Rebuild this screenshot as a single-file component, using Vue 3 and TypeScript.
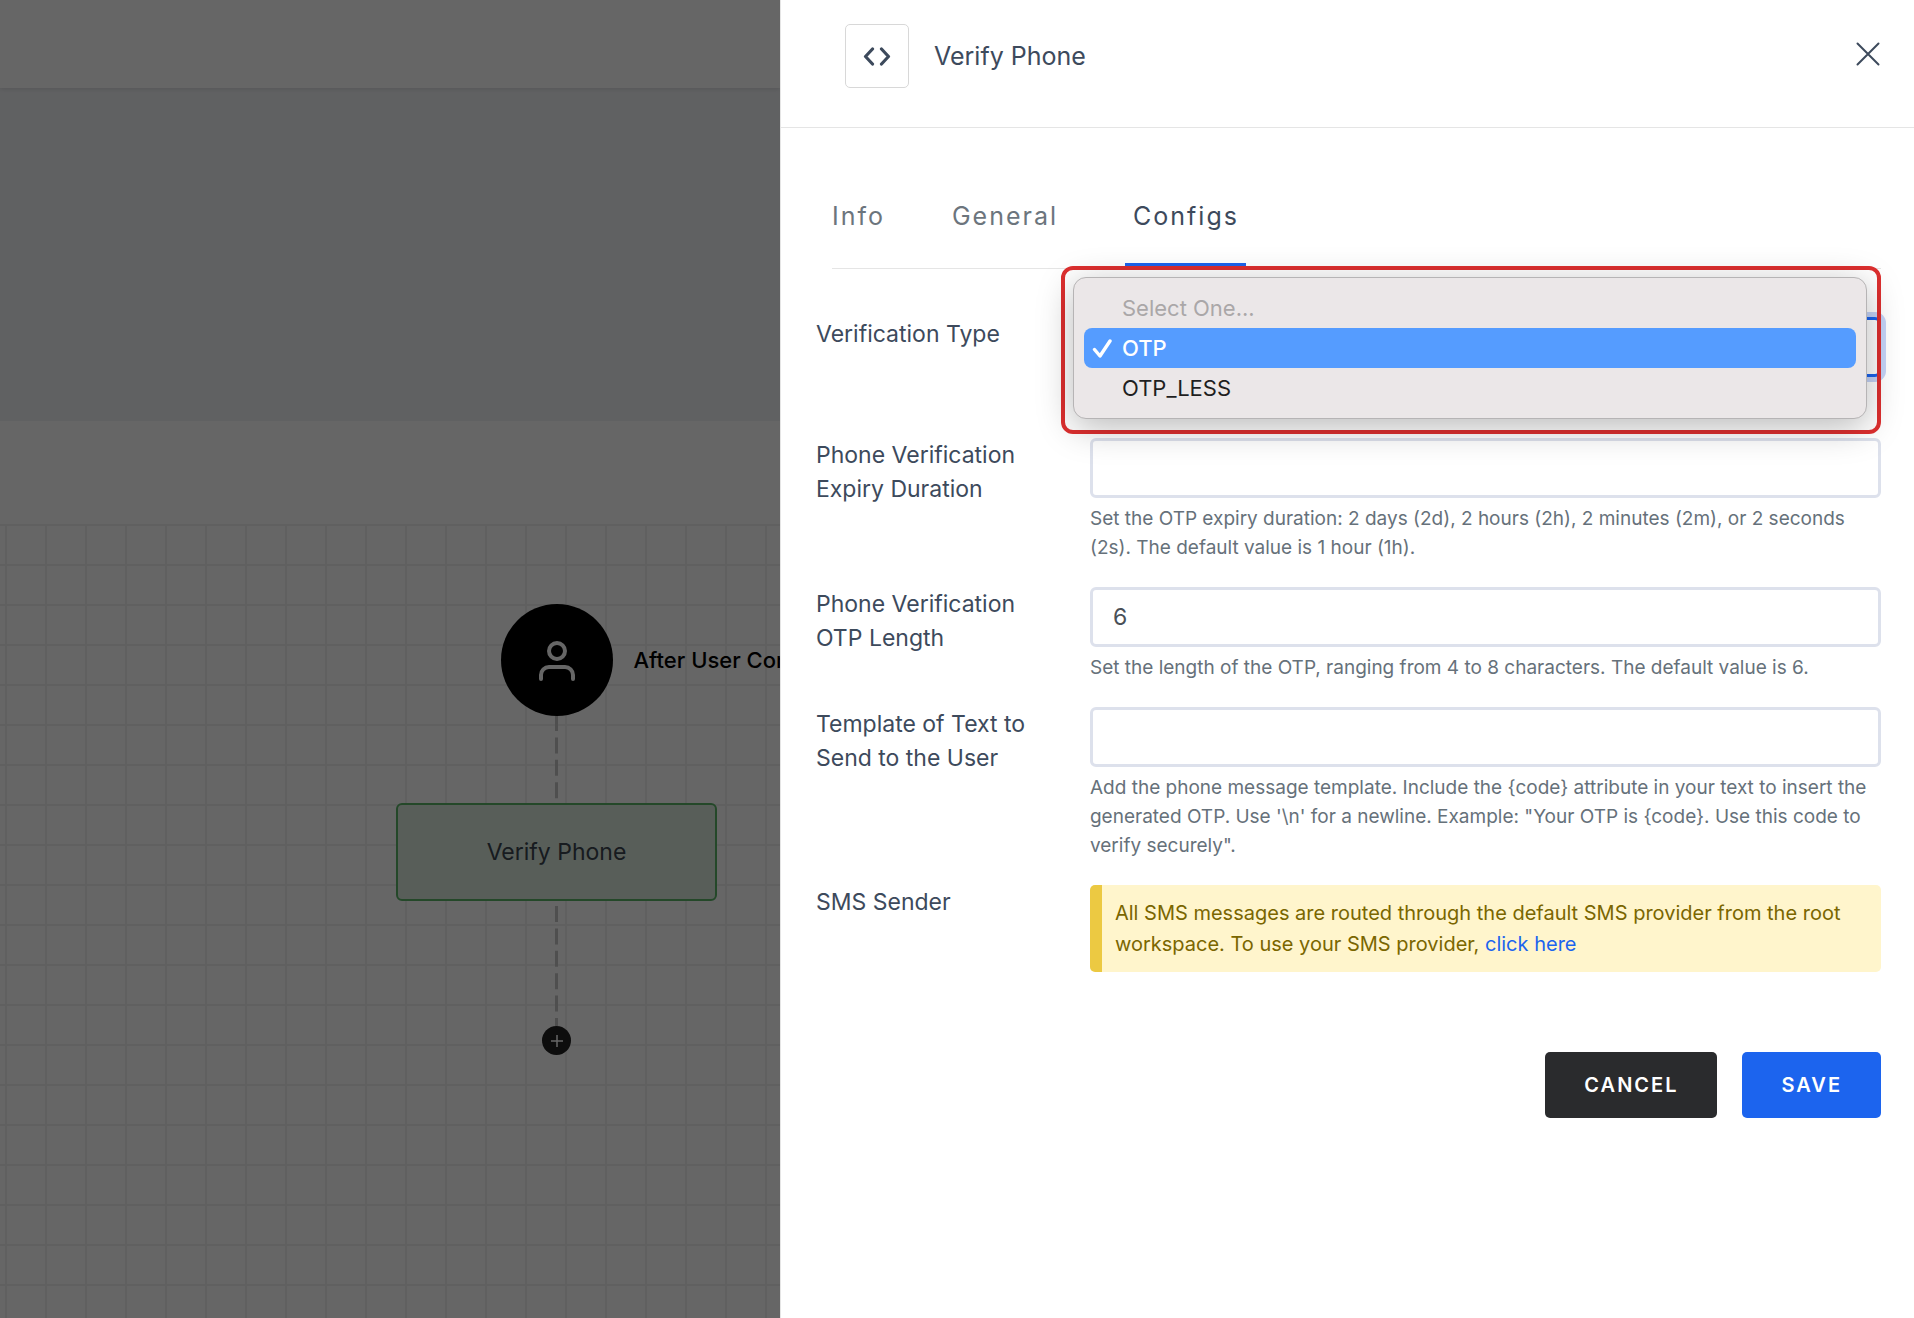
<script setup lang="ts">
import { ref } from 'vue'

interface Option {
  value: string
  label: string
  disabled?: boolean
}

const tabs = ['Info', 'General', 'Configs']
const activeTab = ref('Configs')

const options: Option[] = [
  { value: '', label: 'Select One...', disabled: true },
  { value: 'OTP', label: 'OTP' },
  { value: 'OTP_LESS', label: 'OTP_LESS' },
]

const verificationType = ref('OTP')
const expiry = ref('')
const otpLength = ref('6')
const template = ref('')

const templateHelp =
  'Add the phone message template. Include the {code} attribute in your text to insert the generated OTP. Use \'\\n\' for a newline. Example: "Your OTP is {code}. Use this code to verify securely".'
</script>

<template>
  <div class="page">
    <main class="workspace">
      <div class="topbar"></div>
      <div class="banner"></div>
      <div class="toolbar"></div>
      <div class="canvas">
        <div class="flow">
          <div class="start">
            <svg width="40" height="44" viewBox="0 -1 40 44" fill="none" stroke="#fff" stroke-width="4" stroke-linecap="round">
              <circle cx="20" cy="12" r="8" />
              <path d="M4 40v-4a8 8 0 0 1 8-8h16a8 8 0 0 1 8 8v4" />
            </svg>
            <span class="start-label">After User Con</span>
          </div>
          <svg class="link" width="3" height="87" viewBox="0 0 3 87">
            <line x1="1.5" y1="-1" x2="1.5" y2="83" stroke="#c6c6c6" stroke-width="3" stroke-dasharray="16 6.4" />
          </svg>
          <div class="node">Verify Phone</div>
          <svg class="link" width="3" height="125" viewBox="0 0 3 125">
            <line x1="1.5" y1="5" x2="1.5" y2="125" stroke="#c6c6c6" stroke-width="3" stroke-dasharray="16 6.4" />
          </svg>
          <button class="add" type="button" aria-label="Add step">
            <svg width="14" height="14" viewBox="0 0 14 14" stroke="#fff" stroke-width="1.5">
              <path d="M7 1v12M1 7h12" />
            </svg>
          </button>
        </div>
      </div>
      <div class="dim"></div>
    </main>

    <aside class="drawer">
      <header class="head">
        <div class="head-icon">
          <svg width="28" height="20" viewBox="0 0 28 20" fill="none" stroke="#3d4a5c" stroke-width="3.2" stroke-linecap="round" stroke-linejoin="round">
            <path d="M9.500 3L2.500 10.500L9.500 18M18.500 3l7 7.500L18.500 18" />
          </svg>
        </div>
        <h1>Verify Phone</h1>
        <button class="close" type="button" aria-label="Close">
          <svg width="24" height="24" viewBox="0 0 24 24" stroke="#3d4a5c" stroke-width="2" stroke-linecap="round">
            <path d="M1.500 1.500l21 21M22.500 1.500l-21 21" />
          </svg>
        </button>
      </header>

      <nav class="tabs">
        <button
          v-for="tab in tabs"
          :key="tab"
          type="button"
          class="tab"
          :class="{ active: tab === activeTab }"
          @click="activeTab = tab"
        >
          {{ tab }}
        </button>
      </nav>

      <form class="form" @submit.prevent>
        <div class="row first">
          <label for="type">Verification Type</label>
          <div class="control">
            <select id="type" v-model="verificationType" class="field focused">
              <option v-for="o in options" :key="o.value" :value="o.value" :disabled="o.disabled">{{ o.label }}</option>
            </select>
            <div class="highlight">
              <ul class="menu" role="listbox" aria-label="Verification Type">
                <li
                  v-for="o in options"
                  :key="o.value"
                  role="option"
                  :aria-selected="o.value === verificationType"
                  :class="{ disabled: o.disabled, selected: o.value === verificationType }"
                >
                  <span class="tick">
                    <svg v-if="o.value === verificationType" width="20" height="20" viewBox="0 0 20 20" fill="none" stroke="#fff" stroke-width="3.4" stroke-linecap="round" stroke-linejoin="round">
                      <path d="M2.500 11.500l5.500 6.500L18 3" />
                    </svg>
                  </span>
                  {{ o.label }}
                </li>
              </ul>
            </div>
          </div>
        </div>

        <div class="row">
          <label for="expiry">Phone Verification Expiry Duration</label>
          <div class="control">
            <input id="expiry" v-model="expiry" class="field" type="text" />
            <p class="help">
              Set the OTP expiry duration: 2 days (2d), 2 hours (2h), 2 minutes (2m), or 2 seconds (2s). The default value is 1 hour (1h).
            </p>
          </div>
        </div>

        <div class="row">
          <label for="length">Phone Verification OTP Length</label>
          <div class="control">
            <input id="length" v-model="otpLength" class="field" type="text" />
            <p class="help">Set the length of the OTP, ranging from 4 to 8 characters. The default value is 6.</p>
          </div>
        </div>

        <div class="row">
          <label for="template">Template of Text to Send to the User</label>
          <div class="control">
            <input id="template" v-model="template" class="field" type="text" />
            <p class="help">{{ templateHelp }}</p>
          </div>
        </div>

        <div class="row">
          <span class="label">SMS Sender</span>
          <div class="control">
            <p class="notice">
              All SMS messages are routed through the default SMS provider from the root workspace. To use your SMS provider,
              <a href="#">click here</a>
            </p>
          </div>
        </div>

        <div class="actions">
          <button class="btn dark" type="button">CANCEL</button>
          <button class="btn primary" type="submit">SAVE</button>
        </div>
      </form>
    </aside>
  </div>
</template>

<style>
body {
  margin: 0;
}
</style>

<style scoped>
.page,
.page * {
  box-sizing: border-box;
}

.page {
  display: flex;
  min-height: 100vh;
  font-family: Inter, 'Liberation Sans', sans-serif;
  color: #3d4a5c;
}

button,
input,
select {
  font-family: inherit;
  color: inherit;
}

button {
  padding: 0;
  border: 0;
  background: none;
}

/* Dimmed workspace */
.workspace {
  position: relative;
  display: flex;
  flex: 1;
  flex-direction: column;
  min-width: 0;
  overflow: hidden;
  background: #fff;
}

.topbar {
  height: 88px;
  box-shadow: 0 1px 5px rgba(0, 0, 0, 0.12);
  z-index: 1;
}

.banner {
  height: 333px;
  background: #f1f3f6;
}

.toolbar {
  height: 103px;
}

.canvas {
  position: relative;
  flex: 1;
  background-image: linear-gradient(#f1f1f1 2px, transparent 2px), linear-gradient(90deg, #f1f1f1 2px, transparent 2px);
  background-size: 40px 40px;
  background-position: 5px 0;
}

.flow {
  position: absolute;
  top: 80px;
  left: 396px;
  display: flex;
  flex-direction: column;
  align-items: center;
  width: 321px;
}

.start {
  position: relative;
  display: flex;
  align-items: center;
  justify-content: center;
  width: 112px;
  height: 112px;
  border-radius: 50%;
  background: #000;
}

.start-label {
  position: absolute;
  left: 133px;
  white-space: nowrap;
  font-size: 22px;
  font-weight: 500;
  color: #000;
}

.link {
  display: block;
}

.node {
  display: flex;
  align-items: center;
  justify-content: center;
  width: 100%;
  height: 98px;
  border: 2px solid #5ab468;
  border-radius: 6px;
  background: #dbebdf;
  font-size: 23px;
  color: #3a444e;
}

.add {
  display: flex;
  align-items: center;
  justify-content: center;
  width: 29px;
  height: 29px;
  border-radius: 50%;
  background: #212121;
}

.dim {
  position: absolute;
  inset: 0;
  z-index: 2;
  background: rgba(0, 0, 0, 0.6);
}

/* Drawer */
.drawer {
  flex: 0 0 59.25%;
  min-width: 0;
  border-left: 1px solid #e5e5e5;
  background: #fff;
}

.head {
  display: flex;
  align-items: flex-start;
  height: 128px;
  padding: 24px 34px 0 64px;
  border-bottom: 1px solid #e5e5e5;
}

.head-icon {
  display: flex;
  align-items: center;
  justify-content: center;
  width: 64px;
  height: 64px;
  border: 1px solid #d8d8d8;
  border-radius: 5px;
}

h1 {
  margin: 0 auto 0 25px;
  font-size: 25px;
  font-weight: 400;
  line-height: 64px;
}

.close {
  display: flex;
  align-items: center;
  height: 60px;
}

.tabs {
  display: flex;
  height: 141px;
  margin: 0 33px 0 51px;
  border-bottom: 1px solid #e5e5e5;
}

.tab {
  position: relative;
  margin-right: 67px;
  padding-top: 36px;
  font-size: 25px;
  letter-spacing: 2px;
  color: #6c757d;
}

.tab.active {
  margin-left: 8px;
  color: #3d4a5c;
}

.tab.active::after {
  content: '';
  position: absolute;
  right: -7px;
  bottom: 0;
  left: -8px;
  height: 5px;
  background: #1c64ee;
}

.form {
  padding: 48px 33px 0 35px;
}

.row {
  display: flex;
  margin-bottom: 24px;
}

.row.first {
  height: 97px;
}

label,
.label {
  flex: 0 0 274px;
  padding-right: 50px;
  font-size: 23px;
  line-height: 34px;
}

.control {
  position: relative;
  flex: 1;
  min-width: 0;
}

.field {
  display: block;
  width: 100%;
  height: 60px;
  padding: 0 20px;
  border: 3px solid #dde1ec;
  border-radius: 6px;
  outline: none;
  background: #fff;
  font-size: 23px;
  color: #495057;
}

.field.focused {
  appearance: none;
  border-color: #1c64ee;
  box-shadow: 0 0 0 5px #c5d4f8;
}

.highlight {
  position: absolute;
  top: -51px;
  right: 0;
  left: -29px;
  z-index: 1;
  padding: 7px 10px 11px 8px;
  border: 4px solid #dd2f2f;
  border-radius: 12px;
}

.menu {
  margin: 0;
  padding: 10px;
  border: 1px solid #b6b4b5;
  border-radius: 13px;
  background: #ebe7e8;
  box-shadow: 0 8px 36px rgba(0, 0, 0, 0.28);
  list-style: none;
}

.menu li {
  display: flex;
  align-items: center;
  height: 40px;
  padding-left: 8px;
  border-radius: 8px;
  font-size: 22px;
  color: #1f1f1f;
}

.menu li.selected {
  background: #559cff;
  font-weight: 500;
  color: #fff;
}

.menu li.disabled {
  color: #aaa7a8;
}

.tick {
  display: flex;
  width: 30px;
}

.help {
  margin: 6px 0 1px;
  font-size: 19px;
  line-height: 29px;
  color: #66717a;
}

.notice {
  margin: 0;
  padding: 13px 13px 12px;
  border-left: 12px solid #ecc942;
  border-radius: 5px;
  background: #fff5cc;
  font-size: 20px;
  line-height: 31px;
  color: #7a6600;
}

.notice a {
  color: #1c64ee;
  text-decoration: none;
}

.actions {
  display: flex;
  justify-content: flex-end;
  gap: 25px;
  padding-top: 56px;
}

.btn {
  height: 66px;
  padding: 0 39px;
  border-radius: 5px;
  font-size: 20px;
  font-weight: 600;
  letter-spacing: 2px;
  color: #fff;
}

.dark {
  background: #2a2b2d;
}

.primary {
  background: #1c64ee;
}
</style>
